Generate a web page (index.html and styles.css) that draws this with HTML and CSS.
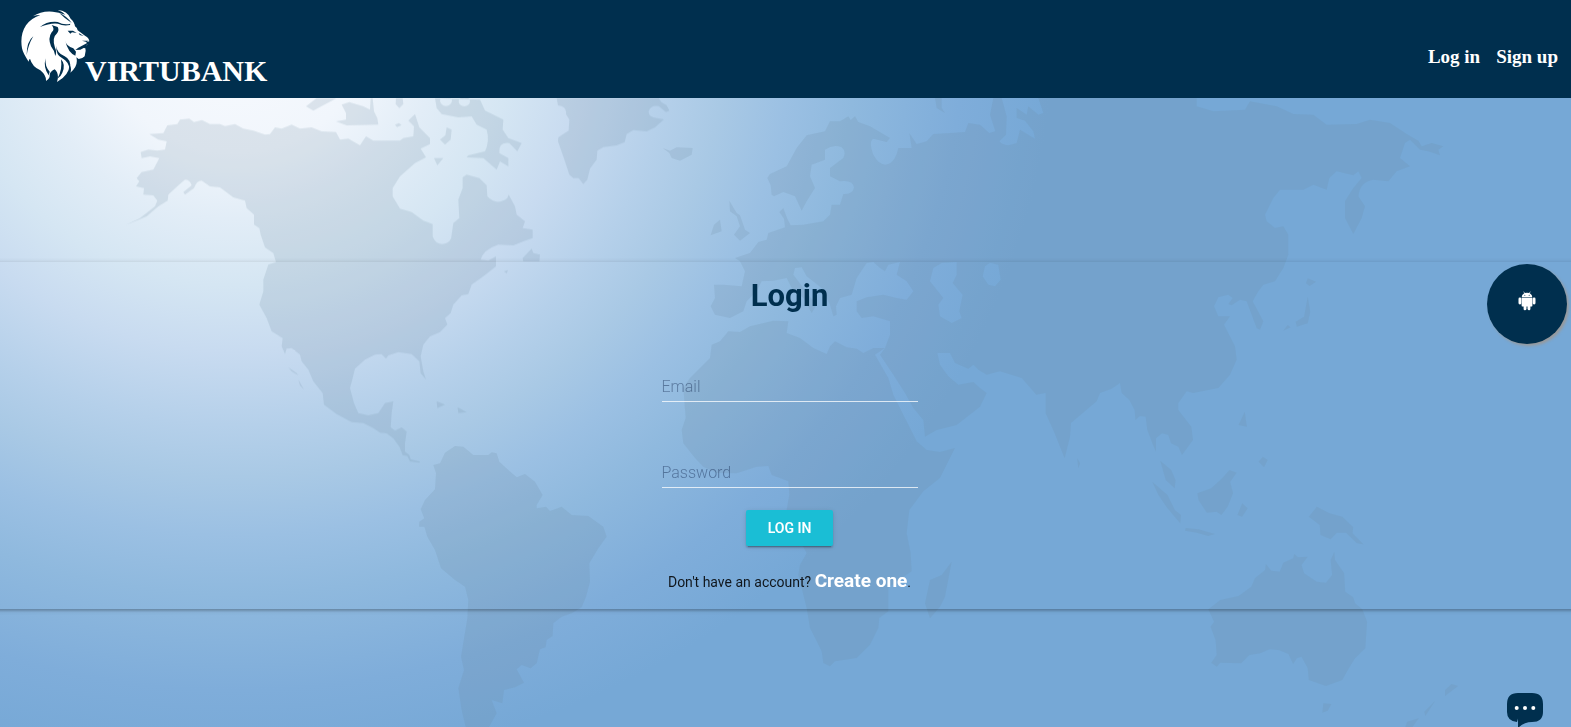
FILE: index.html
```html
<!DOCTYPE html>
<html lang="en">
<head>
<meta charset="utf-8">
<title>Virtubank - Login</title>
<meta name="viewport" content="width=device-width, initial-scale=1">
<link rel="stylesheet" href="styles.css">
</head>
<body>
<header class="site-header">
  <a class="brand" href="#" aria-label="Virtubank home">
    <svg class="brand-logo" viewBox="0 0 256 84" width="256" height="84">
      <g transform="translate(-20 -9) scale(.33333)">
        <path class="lion" d="M99 49Q124 32 158 35Q176 36 196 44Q188 35 173 30Q202 32 212 56Q224 67 225 79Q232 84 233 91L256 108Q267 114 268 124L259 127L262 134L247 143L256 145L257 152L254 169L247 174L236 177L229 172Q236 198 211 218Q216 205 209 194Q207 226 171 246Q179 221 164 208Q148 216 149 227Q150 236 138 243Q139 226 121 211Q96 199 90 176Q86 179 86 185Q69 160 66 145Q59 105 78 76Q92 55 121 45Q109 45 99 49Z"/>
        <g class="lion-cut">
          <path d="M100 109Q80 124 80 166Q84 135 100 109Z"/>
          <path d="M120 81Q141 63 173 66Q192 76 211 71L210 75Q190 79 174 71Q151 68 120 81Z"/>
          <path d="M178 39Q200 48 215 69Q195 56 178 39Z"/>
          <path d="M155 75L173 81Q179 91 170 101Q155 113 165 143Q171 154 166 168Q163 151 153 139Q143 114 155 97Q166 88 155 75Z"/>
          <path d="M203 92L219 92L230 99L216 97L211 101Z"/>
          <path d="M236 99L251 108L239 105Z"/>
          <path d="M195 121Q199 140 220 145L228 155L226 167Q205 160 195 121Z"/>
          <path d="M169 138Q170 159 194 169Q217 180 209 209Q206 185 187 175Q167 165 169 138Z"/>
          <path d="M137 175Q134 199 149 215L146 226Q129 202 137 175Z"/>
          <path d="M183 178Q198 194 187 218Q183 229 172 236Q188 210 183 178Z"/>
          <path d="M235 143L263 128L258 140L241 149L226 150Z"/>
          <path d="M246 122L266 122L260 126Z"/>
        </g>
      </g>
      <text class="brand-name" x="65" y="72">VIRTUBANK</text>
    </svg>
  </a>
  <nav class="site-nav">
    <a href="#">Log in</a>
    <a href="#">Sign up</a>
  </nav>
</header>

<main class="stage">
  <svg class="world" viewBox="0 0 1571 629" preserveAspectRatio="xMidYMin slice" aria-hidden="true">
    <g class="land">
      <!-- North America -->
      <g transform="translate(100 0) scale(.33333)">
        <path d="M240 65L268 62L282 72L306 66L330 78L360 78L375 84L405 78L430 92L460 98L495 110L510 108L525 88L545 92L575 80L600 92L635 88L665 100L708 102L720 125L745 122L780 142L798 115L820 128L900 128L910 120L940 115L942 85L925 68L945 48L958 88L990 120L990 138L962 152L978 178L945 195L900 235L878 270L878 295L900 332L935 342L970 368L998 378L998 415Q1005 438 1028 438Q1055 435 1055 410L1060 375L1078 360L1075 305L1088 270L1088 238L1100 230L1138 240L1160 262L1162 295Q1190 325 1222 300L1226 290L1245 325L1250 350L1275 370L1268 390L1298 395L1298 420L1270 430L1240 442L1195 440Q1150 455 1142 485L1165 488L1188 475L1188 505L1150 535L1115 560L1105 588L1085 592L1060 620L1052 645L1035 660L1042 680L1020 702L990 715L970 740L962 775L970 820L978 845L962 825L958 790L935 768L895 762L865 772L858 782L845 768L825 770L795 785L765 812L758 840L750 870L762 915L775 945L805 952L835 945L855 915L880 910L875 945L872 988L885 998L905 988L920 1001L915 1036L915 1061L928 1071L932 1084L960 1091L958 1094L930 1090L922 1074L908 1071L898 1046L880 1021L860 1006L840 1004L820 990L790 975L755 972L710 948L672 920L668 885L640 850L625 815L605 790L600 770L575 750L560 752L555 768L545 745L548 720L515 700L500 660L478 620L490 580L490 545L505 500L528 492L520 465L495 448L482 410L478 390L462 380L462 350L440 330L435 308L400 298L360 268L330 265L305 248Q290 248 282 270L255 290L250 282L275 262Q270 245 255 245L235 262L205 290L203 308L175 325L140 355L75 382L120 360L165 325L172 308L160 292L130 290L132 270L108 265L118 250L110 240L125 222L160 215L178 180L150 175L125 180L122 162L145 155L172 158L195 155L200 130L175 125L148 108L190 105L202 82L232 78Z"/>
        <path d="M618 25L650 0L710 0L640 38Z"/>
        <path d="M725 20L748 12L790 25L810 35L812 0L818 0L822 40L832 60L835 80L740 82L708 70L738 65L738 45Z"/>
        <path d="M888 0L908 0L910 18L898 30L887 18ZM885 80l12-5 8 6-14 6z"/>
        <path fill-rule="evenodd" d="M1005 0L1140 5L1155 38L1210 65L1208 95L1225 120L1265 135L1252 160L1228 135Q1195 130 1198 165L1225 180L1225 205L1200 190L1190 215L1150 180L1100 178L1105 172L1155 160Q1170 130 1160 95L1130 80L1115 55L1075 58L1025 48L1010 30ZM1020 8a18 16 0 1 0 36 0a18 16 0 1 0-36 0M1076 10a17 15 0 1 0 34 0a17 15 0 1 0-34 0"/>
        <path d="M1040 88L1055 95L1052 125L1035 140L1020 125L1036 112ZM1002 180L1030 180L1012 202ZM1268 480L1295 452L1300 465L1320 470L1318 490L1270 490ZM1212 520l12-4-4 10zM1010 910L1035 920L1012 930ZM1073 928L1100 942L1075 945ZM565 808L590 825L595 832L575 820ZM595 845L612 875L600 862Z"/>
        <path fill-rule="evenodd" d="M1370 0L1374 22Q1402 26 1398 48L1408 65L1406 98L1375 118L1374 130L1395 190L1408 230L1420 240L1436 240L1450 258L1462 245L1470 212L1490 185L1492 158L1510 147L1550 142L1574 132L1580 108L1600 96L1640 100L1665 88L1692 64L1670 60Q1645 58 1646 40Q1652 20 1676 24L1698 42L1708 38L1700 22L1684 12L1676 0Z"/>
      </g>
      <!-- South America -->
      <path transform="translate(380 302) scale(.33333)" d="M225 138L250 140L280 165L325 165L335 157L350 160L358 185L385 210L410 232L435 222L465 245L488 285L470 315L470 325L498 320L510 333L545 320L575 345L625 348L670 380L680 410L655 445L628 490L630 545L618 590L605 622L575 640L545 650L520 670L518 708L500 720L497 742L480 748L470 790L452 805L425 795L410 808L432 848L405 862L372 870L367 910L335 900L350 940L325 985L258 985L245 930L235 865L252 810L243 770L262 655L265 600L255 560L225 540L183 505L165 450L142 410L133 380L117 380L118 365L133 355L122 328L135 300L165 268L168 220L160 195L180 190L195 158Z"/>
      <!-- Europe, Asia and Africa -->
      <g transform="translate(640 0) scale(.33333)">
        <path fill-rule="evenodd" d="M395 290L392 262L382 240L390 228L440 205L470 150L500 112L555 100L570 70L600 70L625 55L632 66L645 55L655 72L690 85L750 120L740 132L700 122Q685 130 700 170Q715 198 735 200Q765 198 775 150L815 150L808 105L830 138L860 130L880 108L930 105L975 102L985 75L1020 80L1048 105L1066 100L1050 50L1060 0L1085 0L1100 55L1098 110L1078 130Q1095 150 1130 135L1140 95L1185 122L1180 100L1155 68L1130 60L1130 30L1160 50L1165 25L1195 50L1210 45L1195 0L1670 0L1670 25L1720 40L1815 35L1830 10L1910 25L1960 48L2020 50L2060 80L2150 78L2190 65L2250 75L2300 108L2335 128L2345 145L2375 135L2410 145L2395 155L2400 172L2365 160L2340 155L2310 125L2295 135L2280 180L2310 205L2270 220L2245 250L2200 245Q2160 250 2155 295L2175 325L2165 360L2140 408L2115 360L2115 310L2140 270L2165 240L2155 220L2140 232L2090 220L2068 240L2060 275L2020 260L1990 275L1920 275L1900 300L1875 350L1880 370L1905 390L1930 385L1945 410L1945 470L1930 510L1905 550L1870 560L1855 580L1838 610L1870 670L1860 695L1850 690L1835 650L1820 610L1800 605L1775 622L1765 618L1778 600L1765 590L1735 598L1722 625L1735 655L1770 655L1752 680L1785 745L1790 785L1770 830L1735 870L1660 885L1640 880L1615 915L1615 936L1654 986L1659 1026L1626 1071L1615 1046L1593 1036L1585 1011L1566 1006L1548 1021L1548 1061L1537 1036L1522 996L1517 956L1500 954L1486 966L1484 936L1468 906L1445 885L1440 855L1415 872L1380 885L1370 910L1293 975L1290 1016L1274 1081L1244 1006L1217 946L1217 885L1189 890L1145 840L1080 820L1040 830L1015 815L1000 800L985 812L945 795L930 765L892 765L900 800L925 835L955 860L1000 852L1020 870L1040 885L1020 926L950 981L890 996L855 1016L850 966L820 930L795 885L760 830L720 770L735 750L750 710L750 670L700 655L665 660L650 640L650 610L680 598L730 590L770 600L800 605L820 580L800 550L770 530L780 492L745 500L735 520L720 510L700 492L680 495L650 540L635 590L600 600L588 625L590 650L580 655L570 620L545 570L500 535L485 508L465 510L460 530L475 550L505 590L530 620L515 645L490 600L455 570L440 540L400 548L365 550L350 580L320 610L310 640L270 660L225 650L212 625L225 600L222 560L250 560L305 565L315 520L300 490L285 480L330 465L355 432L380 425L385 405L435 388L432 362L418 342L430 330L442 362L452 382L490 380L550 370L570 350L575 320L600 320L610 288Q640 290 642 268Q638 245 600 250L570 235L570 210L610 180Q620 160 605 148Q580 138 555 155L555 185L515 200L510 235L525 270L500 310L485 338L465 295L430 282L402 295ZM880 510L905 495L950 492L950 530L938 555L968 590L958 640L965 660L935 675L900 655L895 620L910 600L870 550ZM1035 505L1050 494L1075 500L1082 545L1065 565L1045 560L1028 535Z"/>
        <path d="M700 750L670 765L650 752L620 748L585 730L570 745L560 768L520 750L480 720L440 705L445 670L400 668L330 685L300 702L265 700L240 730L215 740L210 780L150 840L130 870L137 960L125 996L130 1036L165 1080L190 1106L230 1125L290 1126L350 1106L385 1104L395 1131L445 1150L448 1190L440 1236L460 1300L490 1346L500 1366L480 1400L475 1430L500 1530L510 1590L545 1660L550 1695L570 1705L585 1690L650 1680L690 1640L715 1590L718 1560L745 1540L745 1470L770 1450L815 1420L812 1366L800 1306L808 1236L850 1180L900 1140L945 1050L900 1062L860 1056L830 1030L795 960L760 890L745 840L705 770L735 750Z"/>
        <path d="M268 308L290 345L300 352L315 395L330 405L300 428L282 410L300 385L290 355L270 340ZM240 365L245 400L212 412L222 380ZM68 150L90 158L110 148L158 150L155 170L120 188L95 180L88 165ZM885 0L905 0L905 30L915 45L890 30ZM935 1391L915 1496L900 1526L870 1561L855 1516L870 1446L905 1431Z"/>
      </g>
      <!-- Japan, South-East Asia and Oceania -->
      <g transform="translate(1000 302) scale(.36417 .33333)">
        <path d="M845-365L868-355L850-342L840-350ZM845-310L852-265L845-230L815-220L812-235L835-250ZM790-225L798-218L778-208ZM672 35L678 80L655 75ZM722 170L735 180L725 202L710 185ZM212 175L220 190L215 205ZM440 182L470 210L482 240L480 265L455 240ZM418 245L460 285L480 330L497 345L495 370L460 325L435 285ZM510 384L545 388L590 402L572 408L540 398L508 392ZM630 210L650 218L632 245L640 280L625 320L608 345L595 335L568 338L545 300L542 280L580 265L610 235ZM665 310L680 325L665 350L652 345ZM870 320L905 340L940 350L970 382L968 400L998 433L980 430L950 398L925 398L908 418L880 405L878 375L848 350Z"/>
        <path d="M572 628L605 600L655 588L690 560L700 535L728 510L730 492L745 512L768 515L778 488L805 475L808 462L818 472L845 470L828 495L835 520L870 545L895 548L912 525L908 480L918 455L920 480L945 520L948 575L970 592L975 610L995 628L1008 665L1003 745L975 775L955 810L940 840L895 858L848 840L845 805L828 770L815 775L805 792L792 762L765 750L740 748L715 760L685 765L662 790L605 788L595 800L580 788L595 765L592 720L578 680L588 665ZM888 910L910 912L900 932L885 938ZM1240 852L1258 858L1222 888L1222 870ZM1195 902L1168 948L1165 935ZM1118 965L1150 955L1130 985L1112 985Z"/>
      </g>
    </g>
  </svg>

  <section class="login-card">
    <h1 class="login-title">Login</h1>
    <form class="login-form">
      <div class="field">
        <input class="field-input" id="email" type="email">
        <label class="field-label" for="email">Email</label>
      </div>
      <div class="field">
        <input class="field-input" id="password" type="password">
        <label class="field-label" for="password">Password</label>
      </div>
      <button class="submit" type="submit">Log in</button>
    </form>
    <p class="signup-note">Don't have an account? <a href="#">Create one</a>.</p>
  </section>
</main>

<a class="app-link" href="#" aria-label="Get the Android app">
  <svg viewBox="0 0 18 20" width="18" height="20">
    <path d="M3.800 6.200C3.800 4.300 5 3 6.300 2.300L5.400.7 5.800.5 6.800 2.100Q9 1.300 11.200 2.100L12.200.5 12.600.7 11.700 2.300C13 3 14.200 4.300 14.200 6.200Z"/>
    <path d="M3.600 6.700H14.400V14.400Q14.400 15.600 13.200 15.600H12.400V18Q12.300 19.200 11.100 19.200T9.500 18V15.600H8.500V18Q8.200 19.200 6.900 19.200T5.600 18V15.600H4.800Q3.600 15.600 3.600 14.400Z"/>
    <rect x=".5" y="6.600" width="2.800" height="6.800" rx="1.300"/>
    <rect x="14.700" y="6.600" width="2.800" height="6.800" rx="1.300"/>
    <g class="eyes"><circle cx="6.800" cy="4.200" r=".5"/><circle cx="11.200" cy="4.200" r=".5"/></g>
  </svg>
</a>

<button class="chat" type="button" aria-label="Open chat">
  <svg viewBox="0 0 36 34" width="36" height="34">
    <path d="M11 0H25Q36 0 36 11V19Q36 29 25 29Q17 29 11 35V25.500L10 29Q0 28 0 19V11Q0 0 11 0Z"/>
    <g class="dots"><circle cx="9.700" cy="15" r="2"/><circle cx="18" cy="15" r="2"/><circle cx="26.300" cy="15" r="2"/></g>
  </svg>
</button>
</body>
</html>
```

FILE: styles.css
```css
* {
  box-sizing: border-box;
}

body {
  margin: 0;
  min-height: 100vh;
  display: flex;
  flex-direction: column;
  overflow: hidden;
  font-family: Roboto, "Liberation Sans", sans-serif;
  background: #76a8d6;
}

/* Header */
.site-header {
  display: flex;
  justify-content: space-between;
  align-items: center;
  padding: 9px 13px 5px 20px;
  background: #002f4e;
}

.brand-logo {
  display: block;
}

.lion {
  fill: #fff;
}

.lion-cut {
  fill: #002f4e;
}

.brand-name {
  fill: #fff;
  font: bold 30px "Liberation Serif", serif;
}

.site-nav {
  display: flex;
  gap: 16px;
  padding-top: 12px;
}

.site-nav a {
  color: #fff;
  font: bold 19px/24px "Liberation Serif", serif;
  text-decoration: none;
}

/* World map backdrop */
.stage {
  position: relative;
  flex: 1;
  padding-top: 164px;
  overflow: hidden;
  background: radial-gradient(ellipse 52% 117% at 15% -10%,
    #f8fafe 0%,
    #f1f6fc 16%,
    #e2edf7 25%,
    #d5e6f3 34%,
    #c8dbf0 43%,
    #b5d0ea 53%,
    #a9c9e5 60%,
    #9bc0e3 68%,
    #8fb9de 76%,
    #7fadda 89%,
    #76a8d6 100%);
}

.world {
  position: absolute;
  inset: 0;
  width: 100%;
  height: 100%;
}

.land {
  fill: #6c8ba0;
  opacity: .18;
}

/* Login card */
.login-card {
  position: relative;
  display: flex;
  flex-direction: column;
  align-items: center;
  margin: 0 -8px;
  padding: 16px 0 15px 8px;
  box-shadow: 0 2px 2px 0 rgba(0, 0, 0, .14), 0 1px 5px 0 rgba(0, 0, 0, .2);
}

.login-title {
  margin: 0 0 58px;
  color: #002f4e;
  font-size: 31px;
  font-weight: 700;
  line-height: 36px;
}

.login-form {
  display: flex;
  flex-direction: column;
  align-items: center;
}

.field {
  display: grid;
  width: 256px;
  margin-bottom: 56px;
}

.field + .field {
  margin-bottom: 22px;
}

.field-input,
.field-label {
  grid-area: 1 / 1;
  height: 30px;
  font-size: 16px;
  font-weight: 300;
  line-height: 30px;
}

.field-input {
  width: 100%;
  padding: 0;
  border: 0;
  border-bottom: 1px solid rgba(255, 255, 255, .75);
  border-radius: 0;
  outline: 0;
  background: none;
  color: #002f4e;
  font-family: inherit;
}

.field-label {
  color: rgba(0, 20, 60, .4);
  pointer-events: none;
}

.field-input:focus + .field-label {
  visibility: hidden;
}

.submit {
  height: 36px;
  padding: 0 22px;
  border: 0;
  border-radius: 2px;
  background: #1abed5;
  box-shadow: 0 2px 2px 0 rgba(0, 0, 0, .14), 0 3px 1px -2px rgba(0, 0, 0, .2), 0 1px 5px 0 rgba(0, 0, 0, .12);
  color: #fff;
  font: 600 14px/36px Roboto, "Liberation Sans", sans-serif;
  text-transform: uppercase;
}

.signup-note {
  margin: 23px 0 0;
  color: rgba(0, 0, 0, .87);
  font-size: 14px;
  line-height: 24px;
}

.signup-note a {
  color: #fff;
  font-size: 19px;
  font-weight: 700;
  text-decoration: none;
}

/* Floating controls */
.app-link {
  position: fixed;
  top: 264px;
  right: 4px;
  width: 80px;
  height: 80px;
  display: flex;
  align-items: center;
  justify-content: center;
  padding-bottom: 6px;
  border-radius: 50%;
  background: #002f4e;
  box-shadow: 2px 2px 3px #999;
  fill: #fff;
}

.eyes {
  fill: #002f4e;
}

.chat {
  position: fixed;
  right: 28px;
  bottom: 0;
  padding: 0;
  border: 0;
  background: none;
  fill: #002f4e;
}

.chat svg {
  display: block;
}

.dots {
  fill: #fff;
}
```
